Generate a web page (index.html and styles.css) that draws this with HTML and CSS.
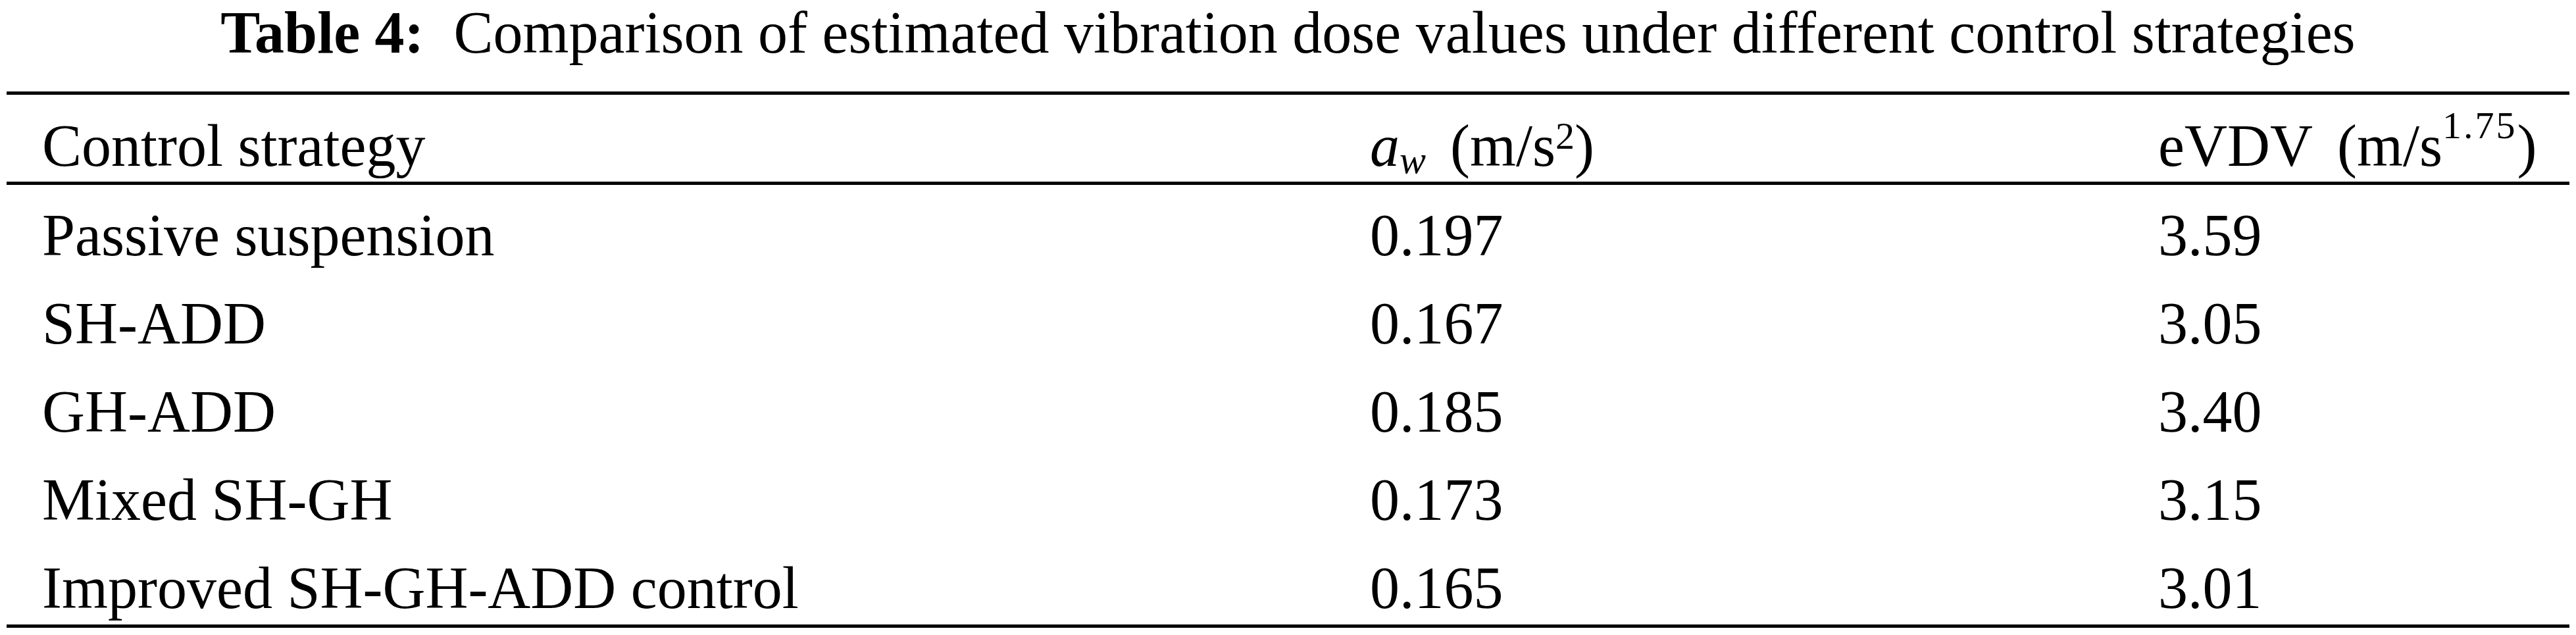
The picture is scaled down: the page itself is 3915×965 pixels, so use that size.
FILE: index.html
```html
<!DOCTYPE html>
<html lang="en">
<head>
<meta charset="utf-8">
<title>Table 4</title>
<link rel="stylesheet" href="styles.css">
</head>
<body>
<div class="page">
  <h1 class="caption"><b class="label">Table 4:</b>Comparison of estimated vibration dose values under different control strategies</h1>
  <div class="table">
    <div class="row head">
      <div class="cell first">Control strategy</div>
      <div class="cell"><i>a</i><sub class="sub">w</sub><span class="unit">(m/s<sup class="sup-low">2</sup>)</span></div>
      <div class="cell">eVDV<span class="unit">(m/s<sup class="sup-high">1.75</sup>)</span></div>
    </div>
    <div class="row">
      <div class="cell first">Passive suspension</div>
      <div class="cell">0.197</div>
      <div class="cell">3.59</div>
    </div>
    <div class="row">
      <div class="cell first">SH-ADD</div>
      <div class="cell">0.167</div>
      <div class="cell">3.05</div>
    </div>
    <div class="row">
      <div class="cell first">GH-ADD</div>
      <div class="cell">0.185</div>
      <div class="cell">3.40</div>
    </div>
    <div class="row">
      <div class="cell first">Mixed SH-GH</div>
      <div class="cell">0.173</div>
      <div class="cell">3.15</div>
    </div>
    <div class="row last">
      <div class="cell first">Improved SH-GH-ADD control</div>
      <div class="cell">0.165</div>
      <div class="cell">3.01</div>
    </div>
  </div>
</div>
</body>
</html>
```
FILE: styles.css
```css
html, body {
  margin: 0;
  padding: 0;
  background: #ffffff;
}

body {
  font-family: "Liberation Serif", "Times New Roman", serif;
  color: #000000;
}

.page {
  padding: 0 10px;
}

.caption {
  margin: 0;
  height: 100px;
  font-size: 90px;
  font-weight: normal;
  line-height: 100px;
  text-align: center;
  white-space: nowrap;
}

.label {
  font-weight: bold;
  margin-right: 45px;
}

.table {
  margin-top: 39px;
  border-top: 5px solid #000000;
  border-bottom: 5px solid #000000;
}

.row {
  display: grid;
  grid-template-columns: 2072px 1198px 1fr;
  box-sizing: border-box;
  height: 134px;
  padding-top: 27px;
  font-size: 90px;
  line-height: 100px;
  white-space: nowrap;
}

.row.head {
  height: 137px;
  padding-top: 28px;
  border-bottom: 5px solid #000000;
}

.row.last {
  height: 132px;
}

.cell.first {
  padding-left: 54px;
}

.unit {
  margin-left: 37px;
}

.sub {
  font-size: 60px;
  font-style: italic;
  line-height: 0;
  vertical-align: -11px;
}

.sup-low,
.sup-high {
  font-size: 58px;
  line-height: 0;
}

.sup-low {
  vertical-align: 26px;
}

.sup-high {
  vertical-align: 42px;
  letter-spacing: 3px;
}
```
